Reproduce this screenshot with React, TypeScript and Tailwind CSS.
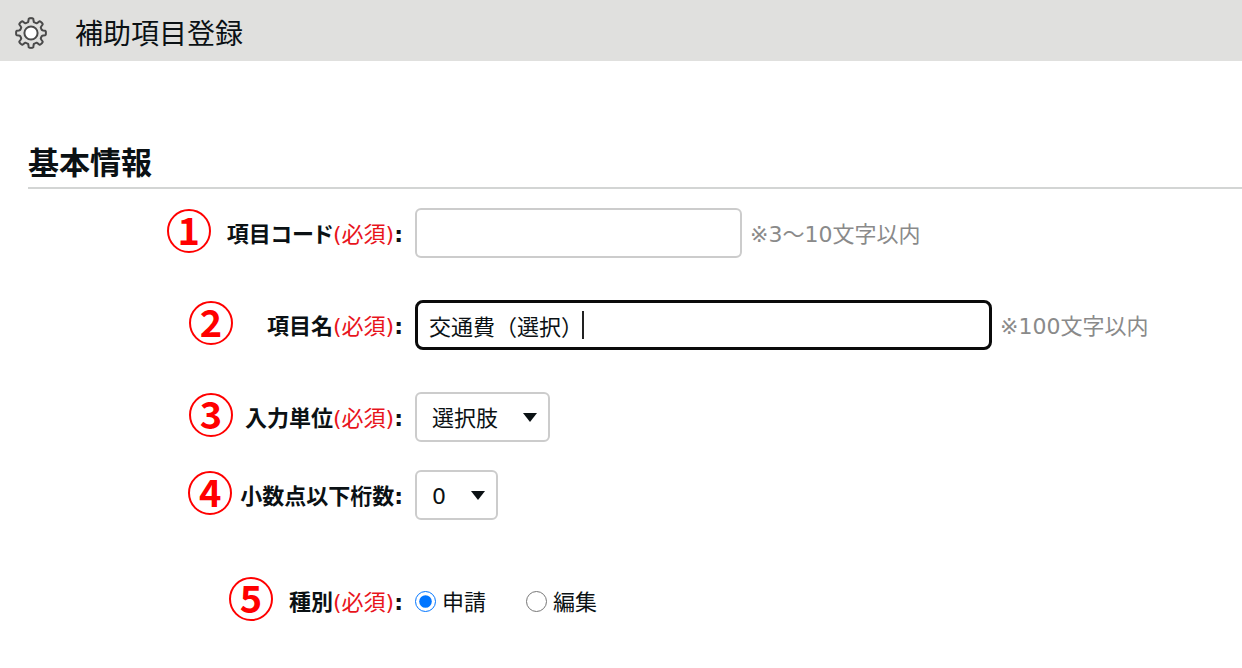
import React, { useState } from 'react';

const REQUIRED = '(必須)';

function GearIcon() {
  // 8 rounded teeth: the radius swings softly between root and tip
  const points: string[] = [];
  for (let deg = 0; deg < 360; deg += 3) {
    const angle = (deg * Math.PI) / 180;
    const radius = 13 + 1.9 * Math.tanh(3.2 * Math.cos(8 * angle));
    points.push(`${(16 + radius * Math.sin(angle)).toFixed(2)},${(16 - radius * Math.cos(angle)).toFixed(2)}`);
  }
  return (
    <svg viewBox="0 0 32 32" className="w-8 h-8 shrink-0" fill="none" stroke="#4a4a4a" strokeWidth="2" strokeLinejoin="round" aria-hidden="true">
      <polygon points={points.join(' ')} />
      <circle cx="16" cy="16" r="6.6" fill="#fff" />
    </svg>
  );
}

type RowProps = {
  no: number;
  label: string;
  htmlFor?: string;
  required?: boolean;
  badgeGap: string;
  children: React.ReactNode;
};

function FormRow({ no, label, htmlFor, required, badgeGap, children }: RowProps) {
  const text = (
    <>
      {label}
      {required && <span className="font-normal text-[#e8141c]">{REQUIRED}</span>}:
    </>
  );
  return (
    <div className="flex items-center min-h-[50px]">
      <div className="w-[403px] shrink-0 flex items-center justify-end">
        <span className={`flex items-center justify-center w-11 h-11 pb-1 mb-1 shrink-0 rounded-full border-2 border-[#ff0000] text-[#ff0000] text-[38px] leading-none font-bold font-['Noto_Sans_CJK_JP',sans-serif] ${badgeGap}`}>
          {no}
        </span>
        {htmlFor ? (
          <label htmlFor={htmlFor} className="pt-1 font-bold whitespace-nowrap [font-feature-settings:'palt']">{text}</label>
        ) : (
          <span id="kind-label" className="pt-1 font-bold whitespace-nowrap">{text}</span>
        )}
      </div>
      <div className="ml-3 flex items-center">{children}</div>
    </div>
  );
}

function Dropdown({ id, width, options }: { id: string; width: string; options: string[] }) {
  return (
    <div className={`relative ${width}`}>
      <select id={id} className="appearance-none w-full h-[50px] pl-[15px] pt-1 rounded-md border-2 border-[#cccccc] bg-white">
        {options.map(option => (
          <option key={option}>{option}</option>
        ))}
      </select>
      <svg viewBox="0 0 14 9" className="absolute right-[13px] top-[21px] w-[14px] h-[9px] pointer-events-none" aria-hidden="true">
        <path d="M0 0h14L7 9z" fill="#0b1114" />
      </svg>
    </div>
  );
}

export default function App() {
  const [code, setCode] = useState('');
  const [name, setName] = useState('交通費（選択）');
  const [kind, setKind] = useState('申請');

  return (
    <div className="min-h-screen bg-white text-[#0b1114] text-[22px] leading-8 font-['DejaVu_Sans','Noto_Sans_CJK_JP',sans-serif]">
      {/* Header */}
      <header className="h-[61px] flex items-center gap-7 pl-[15px] pt-1 bg-[#e0e0de]">
        <GearIcon />
        <h1 className="pt-1 text-[28px]">補助項目登録</h1>
      </header>

      <main className="pt-20">
        <h2 className="ml-7 pb-0.5 border-b-2 border-[#d3d5d4] text-[31px] leading-[44px] font-bold">基本情報</h2>

        <form className="pt-[19px] pb-10" onSubmit={e => e.preventDefault()}>
          <FormRow no={1} label="項目コード" htmlFor="code" required badgeGap="mr-4">
            <input
              id="code"
              type="text"
              value={code}
              onChange={e => setCode(e.target.value)}
              className="w-[327px] h-[50px] px-3 rounded-md border-2 border-[#cccccc] outline-none"
            />
            <span className="ml-2 pt-1 text-[#8a8a8a]">※3～10文字以内</span>
          </FormRow>

          <div className="mt-[42px]">
            <FormRow no={2} label="項目名" htmlFor="name" required badgeGap="mr-[34px]">
              <div className="relative">
                <input
                  id="name"
                  type="text"
                  value={name}
                  onChange={e => setName(e.target.value)}
                  className="w-[577px] h-[50px] pl-[11px] rounded-lg border-3 border-[#0b0b0b] outline-none"
                />
                {/* Text cursor */}
                <span className="absolute left-[167px] top-[11px] w-0.5 h-7 bg-[#222222]" />
              </div>
              <span className="ml-2 pt-1 text-[#8a8a8a]">※100文字以内</span>
            </FormRow>
          </div>

          <div className="mt-[42px]">
            <FormRow no={3} label="入力単位" htmlFor="unit" required badgeGap="mr-3">
              <Dropdown id="unit" width="w-[135px]" options={['選択肢', '数値', '文字']} />
            </FormRow>
          </div>

          <div className="mt-7">
            <FormRow no={4} label="小数点以下桁数" htmlFor="digits" badgeGap="mr-2">
              <Dropdown id="digits" width="w-[83px]" options={['0', '1', '2', '3']} />
            </FormRow>
          </div>

          <div className="mt-14">
            <FormRow no={5} label="種別" required badgeGap="mr-4">
              <div role="radiogroup" aria-labelledby="kind-label" className="flex gap-10">
                {['申請', '編集'].map(option => (
                  <label key={option} className="flex items-center gap-1.5">
                    <input
                      type="radio"
                      name="kind"
                      checked={kind === option}
                      onChange={() => setKind(option)}
                      className="w-[21px] h-[21px] accent-[#0075ff]"
                    />
                    <span className="pt-1">{option}</span>
                  </label>
                ))}
              </div>
            </FormRow>
          </div>
        </form>
      </main>
    </div>
  );
}
